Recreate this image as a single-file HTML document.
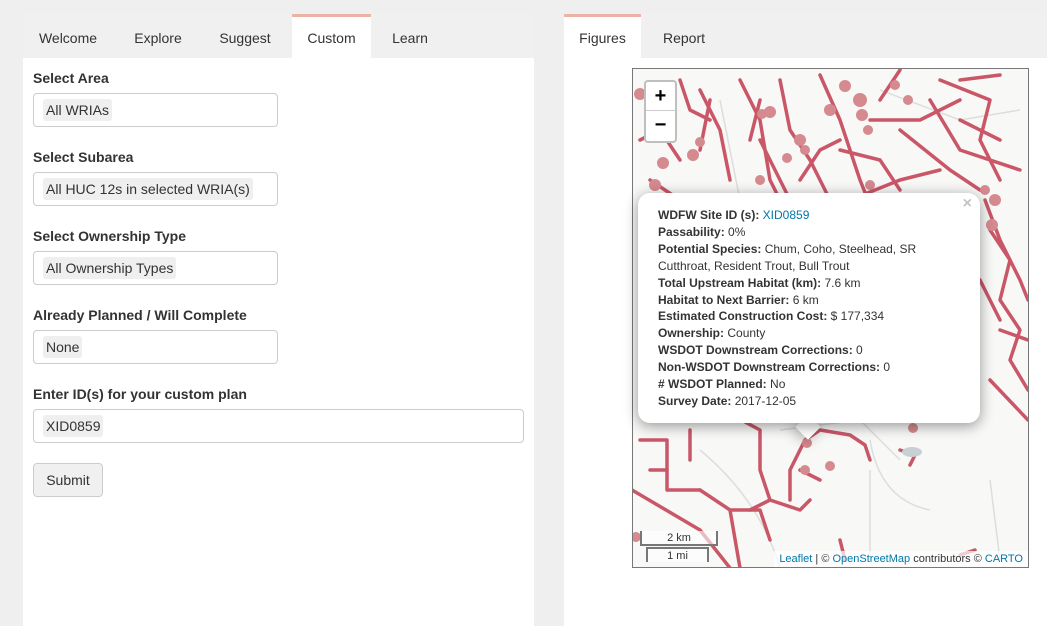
<!DOCTYPE html>
<html><head><meta charset="utf-8"><style>
*{box-sizing:border-box;margin:0;padding:0}
body{width:1047px;height:626px;background:#efefef;font-family:"Liberation Sans",Arial,sans-serif;color:#333;position:relative;overflow:hidden;font-size:14px}
.abs{position:absolute}
.panel{background:#fff}
.tab{position:absolute;top:14px;height:44px;line-height:48px;font-size:14px;color:#333;text-align:center}
.tab.act{background:#fff;border-top:3px solid #ecb4a6;line-height:42px}
.lbl{position:absolute;left:33px;font-weight:bold;font-size:14px}
.box{position:absolute;left:33px;width:245px;height:34px;border:1px solid #ccc;border-radius:4px;background:#fff}
.chip{position:absolute;left:9px;top:5px;height:22px;line-height:22px;padding:0 3px;background:#efefef;border-radius:3px;font-size:14px}
.pop{left:638px;top:193px;width:342px;height:230px;background:#fff;border-radius:12px;box-shadow:0 3px 14px rgba(0,0,0,.4);padding:14px 20px;font-size:12px;line-height:16.9px;color:#333}
.pop b{font-weight:bold}
</style></head><body>
<div class="abs panel" style="left:23px;top:14px;width:511px;height:612px"></div>
<div class="abs" style="left:23px;top:14px;width:511px;height:44px;background:#f0f0f0"></div>
<div class="tab" style="left:23px;width:90px">Welcome</div>
<div class="tab" style="left:116px;width:84px">Explore</div>
<div class="tab" style="left:203px;width:84px">Suggest</div>
<div class="tab act" style="left:292px;width:79px">Custom</div>
<div class="tab" style="left:375px;width:70px">Learn</div>

<div class="lbl" style="top:70px">Select Area</div>
<div class="box" style="top:93px"><span class="chip">All WRIAs</span></div>
<div class="lbl" style="top:149px">Select Subarea</div>
<div class="box" style="top:172px"><span class="chip">All HUC 12s in selected WRIA(s)</span></div>
<div class="lbl" style="top:228px">Select Ownership Type</div>
<div class="box" style="top:251px"><span class="chip">All Ownership Types</span></div>
<div class="lbl" style="top:307px">Already Planned / Will Complete</div>
<div class="box" style="top:330px"><span class="chip">None</span></div>
<div class="lbl" style="top:386px">Enter ID(s) for your custom plan</div>
<div class="box" style="top:409px;width:491px"><span class="chip">XID0859</span></div>
<div class="abs" style="left:33px;top:463px;width:70px;height:34px;border:1px solid #ccc;border-radius:4px;background:#f0f0f0;text-align:center;line-height:32px">Submit</div>

<div class="abs panel" style="left:564px;top:14px;width:483px;height:612px"></div>
<div class="abs" style="left:564px;top:14px;width:483px;height:44px;background:#f0f0f0"></div>
<div class="tab act" style="left:564px;width:77px">Figures</div>
<div class="tab" style="left:648px;width:72px">Report</div>

<div class="abs" style="left:632px;top:68px;width:397px;height:500px;border:1px solid #777;background:#f8f8f7;overflow:hidden">
<svg width="397" height="500" viewBox="632 68 397 500" style="position:absolute;left:-1px;top:-1px">
<g fill="none" stroke="#ddd" stroke-width="1.5">
<path d="M700 450 Q760 500 780 568"/><path d="M780 430 L860 420 L900 460"/><path d="M870 470 L870 560"/><path d="M990 480 L1000 560"/><path d="M640 300 Q680 320 700 400"/><path d="M880 90 L960 120 L1020 110"/><path d="M870 440 Q880 500 930 510"/><path d="M720 100 L740 200"/>
</g>
<g fill="none" stroke="#c95768" stroke-width="3.5" stroke-linecap="round" stroke-linejoin="round">
<path d="M740 80 L760 120 L770 180 L800 240 L810 300"/>
<path d="M700 90 L720 130 L730 180"/>
<path d="M780 80 L790 130 L810 160 L830 200 L850 260"/>
<path d="M820 75 L840 120 L860 180 L880 230"/>
<path d="M870 120 L920 120 L960 100"/>
<path d="M900 130 L950 170 L980 190"/>
<path d="M940 80 L990 100 L980 140 L1000 180"/>
<path d="M930 100 L960 150 L1020 170"/>
<path d="M960 80 L1000 75"/>
<path d="M640 140 L660 130 L680 160"/>
<path d="M650 180 L680 200 L700 230"/>
<path d="M760 140 L790 200 L780 230"/>
<path d="M800 180 L820 150 L840 140"/>
<path d="M680 80 L690 110 L710 120"/>
<path d="M710 100 L700 150"/>
<path d="M760 100 L750 140"/>
<path d="M840 150 L880 160 L900 190"/>
<path d="M850 200 L900 180 L940 170"/>
<path d="M880 100 L900 70"/>
<path d="M960 120 L1000 140"/>
<path d="M985 200 L1000 240 L1020 280 L1028 300"/>
<path d="M990 230 L1010 260 L1000 300 L1020 330 L1010 360 L1028 390"/>
<path d="M1000 330 L1028 340"/>
<path d="M980 280 L1000 320"/>
<path d="M990 380 L1028 420"/>
<path d="M640 440 L667 440 L667 490 L700 490"/>
<path d="M667 470 L650 470"/>
<path d="M632 490 L700 530 L730 568"/>
<path d="M700 490 L730 510 L740 568"/>
<path d="M730 510 L760 510 L770 540"/>
<path d="M745 422 L760 430 L760 470 L770 500 L800 510 L810 500"/>
<path d="M770 500 L750 510"/>
<path d="M805 440 L820 430 L850 435 L865 445 L870 460"/>
<path d="M805 440 L790 470 L790 500"/>
<path d="M800 470 L820 480"/>
<path d="M900 450 L915 455 L910 465"/>
<path d="M690 430 L690 460"/>
<path d="M840 540 L845 560"/>
<path d="M960 555 L975 550"/>
</g>
<g fill="#d48a8e">
<circle cx="640" cy="94" r="6"/><circle cx="663" cy="163" r="6"/><circle cx="655" cy="185" r="6"/><circle cx="693" cy="155" r="6"/><circle cx="700" cy="142" r="5"/><circle cx="762" cy="114" r="5"/><circle cx="770" cy="112" r="6"/><circle cx="800" cy="140" r="6"/><circle cx="805" cy="150" r="5"/><circle cx="830" cy="110" r="6"/><circle cx="845" cy="86" r="6"/><circle cx="860" cy="100" r="7"/><circle cx="862" cy="115" r="6"/><circle cx="868" cy="130" r="5"/><circle cx="908" cy="100" r="5"/><circle cx="895" cy="85" r="5"/><circle cx="760" cy="180" r="5"/><circle cx="787" cy="158" r="5"/><circle cx="870" cy="185" r="5"/><circle cx="995" cy="200" r="6"/><circle cx="992" cy="225" r="6"/><circle cx="985" cy="190" r="5"/><circle cx="807" cy="443" r="5"/><circle cx="805" cy="470" r="5"/><circle cx="830" cy="466" r="5"/><circle cx="913" cy="428" r="5"/><circle cx="636" cy="537" r="5"/>
</g>
<ellipse cx="912" cy="452" rx="10" ry="5" fill="#c8d0d4"/>
</svg>
<div class="abs" style="left:11px;top:11px;width:33px;height:63px;background:#fff;border:2px solid rgba(0,0,0,.25);border-radius:4px">
<div style="height:29px;border-bottom:1px solid #ccc;text-align:center;font:bold 20px/29px 'Liberation Sans';color:#000">+</div>
<div style="text-align:center;font:bold 20px/28px 'Liberation Sans';color:#000">−</div>
</div>
<div class="abs" style="left:7px;top:462px;width:78px;height:15px;border:2px solid #777;border-top:none;background:rgba(255,255,255,.6);font-size:11px;text-align:center;line-height:14px">2 km</div>
<div class="abs" style="left:13px;top:478px;width:63px;height:15px;border:2px solid #777;border-bottom:none;background:rgba(255,255,255,.6);font-size:11px;text-align:center;line-height:14px">1 mi</div>
<div class="abs" style="right:0;bottom:0;background:rgba(255,255,255,.7);font-size:11px;padding:1px 5px;color:#333;line-height:14px"><span style="color:#0078a8">Leaflet</span> | © <span style="color:#0078a8">OpenStreetMap</span> contributors © <span style="color:#0078a8">CARTO</span></div>
</div>
<div class="abs" style="left:799px;top:418px;width:18px;height:18px;background:#fff;transform:rotate(45deg);box-shadow:0 3px 14px rgba(0,0,0,.3)"></div>
<div class="abs pop">
<div class="abs" style="right:8px;top:2px;font:bold 16px 'Liberation Sans';color:#c3c3c3">×</div>
<div><b>WDFW Site ID (s):</b> <span style="color:#0078a8">XID0859</span></div>
<div><b>Passability:</b> 0%</div>
<div><b>Potential Species:</b> Chum, Coho, Steelhead, SR Cutthroat, Resident Trout, Bull Trout</div>
<div><b>Total Upstream Habitat (km):</b> 7.6 km</div>
<div><b>Habitat to Next Barrier:</b> 6 km</div>
<div><b>Estimated Construction Cost:</b> $ 177,334</div>
<div><b>Ownership:</b> County</div>
<div><b>WSDOT Downstream Corrections:</b> 0</div>
<div><b>Non-WSDOT Downstream Corrections:</b> 0</div>
<div><b># WSDOT Planned:</b> No</div>
<div><b>Survey Date:</b> 2017-12-05</div>
</div>
</body></html>
